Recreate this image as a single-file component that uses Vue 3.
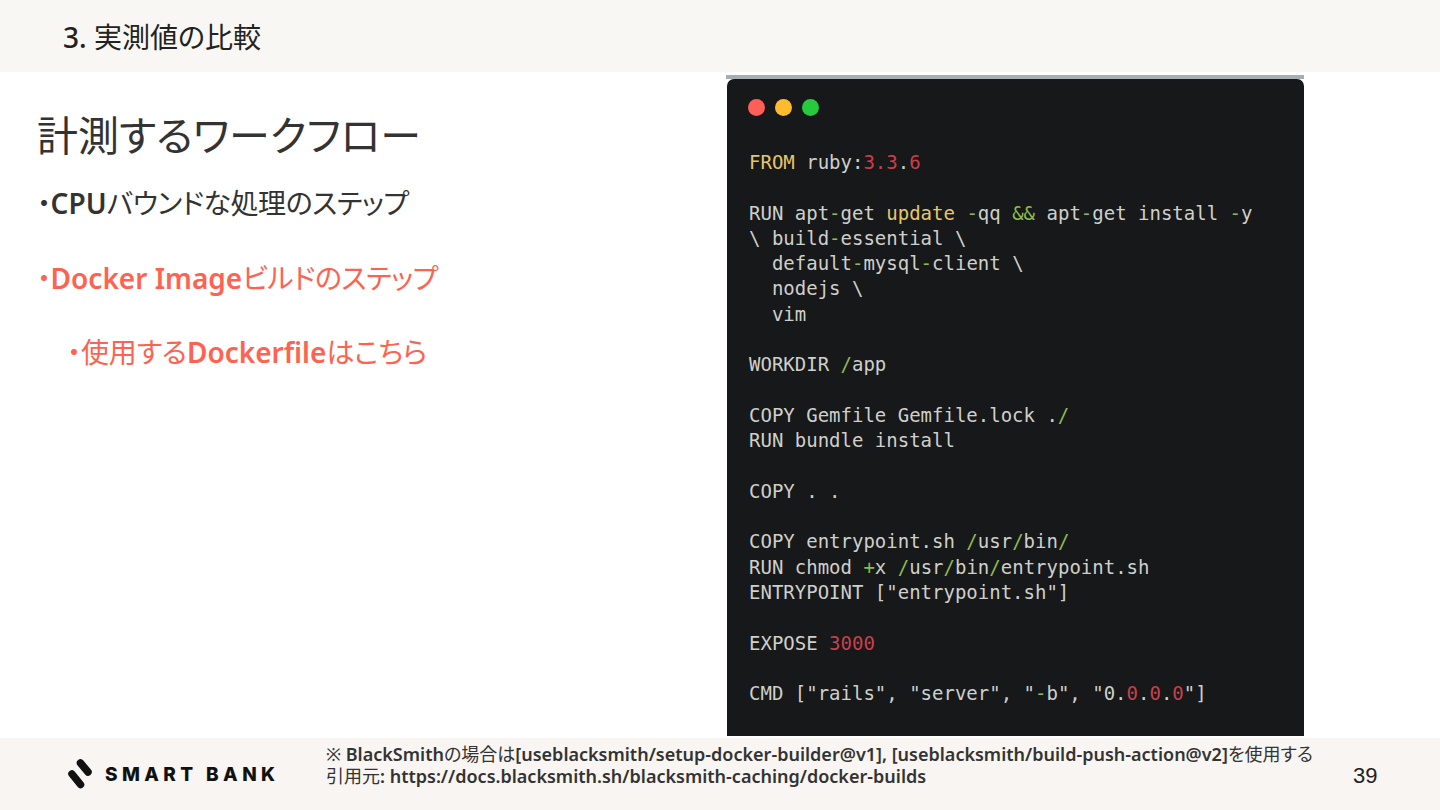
<script setup>
const lines = [
  [['k','FROM'],['t',' ruby:'],['r','3.3'],['t','.'],['r','6']],
  [],
  [['t','RUN apt'],['g','-'],['t','get '],['k','update'],['t',' '],['g','-'],['t','qq '],['g','&&'],['t',' apt'],['g','-'],['t','get install '],['g','-'],['t','y']],
  [['t','\\ build'],['g','-'],['t','essential \\']],
  [['t','  default'],['g','-'],['t','mysql'],['g','-'],['t','client \\']],
  [['t','  nodejs \\']],
  [['t','  vim']],
  [],
  [['t','WORKDIR '],['g','/'],['t','app']],
  [],
  [['t','COPY Gemfile Gemfile.lock .'],['g','/']],
  [['t','RUN bundle install']],
  [],
  [['t','COPY . .']],
  [],
  [['t','COPY entrypoint.sh '],['g','/'],['t','usr'],['g','/'],['t','bin'],['g','/']],
  [['t','RUN chmod '],['g','+'],['t','x '],['g','/'],['t','usr'],['g','/'],['t','bin'],['g','/'],['t','entrypoint.sh']],
  [['t','ENTRYPOINT ["entrypoint.sh"]']],
  [],
  [['t','EXPOSE '],['r','3000']],
  [],
  [['t','CMD ["rails", "server", "'],['g','-'],['t','b", "0.'],['r','0'],['t','.'],['r','0'],['t','.'],['r','0'],['t','"]']],
]
</script>

<template>
  <div class="page">
    <header class="head"><h1><b>3.</b> 実測値の比較</h1></header>
    <main class="main">
      <section class="left">
        <h2>計測するワークフロー</h2>
        <p class="item">・<b>CPU</b>バウンドな処理のステップ</p>
        <p class="item accent">・<b>Docker Image</b>ビルドのステップ</p>
        <p class="item accent sub">・使用する<b>Dockerfile</b>はこちら</p>
      </section>
      <section class="card">
        <div class="panel">
          <div class="dots"><i class="d1"></i><i class="d2"></i><i class="d3"></i></div>
          <div class="code">
            <div v-for="(line, i) in lines" :key="i" class="line"><span v-for="(s, j) in line" :key="j" :class="s[0]">{{ s[1] }}</span></div>
          </div>
        </div>
      </section>
    </main>
    <footer class="foot">
      <div class="logo">
        <svg width="24" height="30" viewBox="0 0 24 30"><path d="M12.5 4 L20 13 M4 15 L12.5 25.5" stroke="#111" stroke-width="7.5" stroke-linecap="round" fill="none"/></svg>
        <span>SMART BANK</span>
      </div>
      <div class="note">
        <div>※ <b>BlackSmith</b>の場合は<b>[useblacksmith/setup-docker-builder@v1], [useblacksmith/build-push-action@v2]</b>を使用する</div>
        <div>引用元<b>: https://docs.blacksmith.sh/blacksmith-caching/docker-builds</b></div>
      </div>
      <div class="num">39</div>
    </footer>
  </div>
</template>

<style>
html, body { margin: 0; background: #fff; }
</style>

<style scoped>
.page { width: 1440px; height: 810px; display: flex; flex-direction: column; overflow: hidden; font-family: "Noto Sans", "Noto Sans CJK JP", sans-serif; color: #333; }
.head { height: 72px; flex: none; background: #f9f7f3; display: flex; align-items: center; padding-left: 63px; box-sizing: border-box; }
.head h1 { margin: 0; font-size: 28px; font-weight: 400; color: #222; font-feature-settings: "palt"; }
.head b { font-weight: 500; }
.main { flex: 1; display: flex; min-height: 0; }
.left { width: 726px; flex: none; box-sizing: border-box; padding: 33px 0 0 37px; }
.left h2 { margin: 0; font-size: 41px; line-height: 60px; font-weight: 400; font-feature-settings: "palt"; }
.item { margin: 0 0 36px; font-size: 28px; line-height: 38.5px; font-weight: 400; letter-spacing: -0.45px; font-feature-settings: "palt"; }
.item b { font-weight: 600; letter-spacing: 0; }
.left h2 + .item { margin-top: 19px; }
.accent { color: #ff6250; }
.sub { padding-left: 30px; letter-spacing: -0.1px; }
.card { width: 578px; height: 661px; margin-top: 3px; box-sizing: border-box; background: #fff; border-top: 4px solid #a5aeb3; padding-left: 1px; }
.panel { height: 100%; box-sizing: border-box; background: #161819; border-radius: 7px 7px 0 0; padding: 20px 0 0 21px; }
.dots { display: flex; gap: 10px; height: 17px; }
.dots i { width: 17px; height: 17px; border-radius: 50%; display: block; }
.d1 { background: #ff5f57; }
.d2 { background: #febb2e; }
.d3 { background: #27c93f; }
.code { margin-top: 34px; margin-left: 1px; font-family: "DejaVu Sans Mono", monospace; font-size: 19px; line-height: 25.3px; color: #cfcfcb; white-space: pre; }
.line { height: 25.3px; }
.k { color: #e6c767; }
.r { color: #c8404a; }
.g { color: #8fbb4e; }
.foot { height: 72px; flex: none; background: #f8f5f2; display: flex; align-items: center; position: relative; }
.logo { width: 326px; flex: none; box-sizing: border-box; padding-left: 68px; display: flex; align-items: center; gap: 13px; color: #111; font-family: "Inter", sans-serif; font-weight: 800; font-size: 19px; letter-spacing: 4.4px; white-space: nowrap; }
.note { flex: 1; font-size: 18px; line-height: 22px; color: #333; white-space: nowrap; margin-top: -18px; font-feature-settings: "palt"; }
.note b { font-weight: 600; }
.num { width: 87px; margin-top: 4px; font-family: "Liberation Sans", sans-serif; font-size: 22px; color: #222; }
</style>
